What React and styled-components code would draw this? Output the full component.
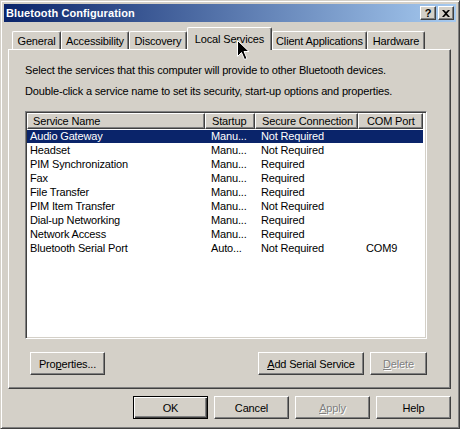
import React from "react";
import styled, { createGlobalStyle } from "styled-components";

const GlobalStyle = createGlobalStyle`
  body {
    margin: 0;
    background: #ffffff;
    font-family: "Liberation Sans", Arial, sans-serif;
    font-size: 11px;
    letter-spacing: -0.16px;
  }
`;

const tabs = [
  { label: "General", width: 49 },
  { label: "Accessibility", width: 68 },
  { label: "Discovery", width: 58 },
  { label: "Local Services", width: 85, active: true },
  { label: "Client Applications", width: 95 },
  { label: "Hardware", width: 58 },
];

const columns = [
  { label: "Service Name", width: 178, pad: 5 },
  { label: "Startup", width: 50, pad: 6 },
  { label: "Secure Connection", width: 103, pad: 6 },
  { label: "COM Port", width: 65, pad: 8 },
];

const services = [
  ["Audio Gateway", "Manu...", "Not Required", ""],
  ["Headset", "Manu...", "Not Required", ""],
  ["PIM Synchronization", "Manu...", "Required", ""],
  ["Fax", "Manu...", "Required", ""],
  ["File Transfer", "Manu...", "Required", ""],
  ["PIM Item Transfer", "Manu...", "Not Required", ""],
  ["Dial-up Networking", "Manu...", "Required", ""],
  ["Network Access", "Manu...", "Required", ""],
  ["Bluetooth Serial Port", "Auto...", "Not Required", "COM9"],
];

const App = () => {
  return (
    <>
      <GlobalStyle />
      <Window>
        <TitleBar>
          <TitleText>Bluetooth Configuration</TitleText>
          <CaptionButtons>
            <CaptionButton>?</CaptionButton>
            <CaptionButton gap={2}>
              <svg width="8" height="7" viewBox="0 0 8 7">
                <path d="M0 0h2l2 2 2-2h2L5 3.5 8 7H6L4 5 2 7H0l3-3.5z" fill="#000" />
              </svg>
            </CaptionButton>
          </CaptionButtons>
        </TitleBar>

        <Body>
          <TabStrip>
            {tabs.map((t) => (
              <Tab key={t.label} width={t.width} active={t.active}>
                {t.label}
              </Tab>
            ))}
          </TabStrip>

          <Panel>
            <Description>
              Select the services that this computer will provide to other Bluetooth devices.
            </Description>
            <Description second>
              Double-click a service name to set its security, start-up options and properties.
            </Description>

            <ListBox>
              <HeaderRow>
                {columns.map((c) => (
                  <HeaderCell key={c.label} width={c.width} pad={c.pad}>
                    {c.label}
                  </HeaderCell>
                ))}
              </HeaderRow>
              {services.map((row, i) => (
                <Row key={row[0]} selected={i === 0}>
                  {row.map((cell, j) => (
                    <Cell key={j} width={columns[j].width} pad={j === 0 ? 3 : columns[j].pad}>
                      {cell}
                    </Cell>
                  ))}
                </Row>
              ))}
            </ListBox>

            <PanelButtons>
              <Button width={75}>
                Pro<u>p</u>erties...
              </Button>
              <Spacer />
              <Button width={106}>
                <u>A</u>dd Serial Service
              </Button>
              <Button width={57} disabled>
                <u>D</u>elete
              </Button>
            </PanelButtons>
          </Panel>

          <DialogButtons>
            <Button width={75} primary>
              OK
            </Button>
            <Button width={75}>Cancel</Button>
            <Button width={75} disabled>
              <u>A</u>pply
            </Button>
            <Button width={75}>Help</Button>
          </DialogButtons>
        </Body>

        <Cursor width="13" height="21" viewBox="0 0 13 21">
          <path
            d="M0.5 0.5 L0.5 16.5 L4.5 12.5 L7.5 19.5 L10 18.5 L7 11.5 L12 11.5 Z"
            fill="#000"
            stroke="#fff"
            strokeWidth="1"
          />
        </Cursor>
      </Window>
    </>
  );
};

export default App;

const Window = styled.div`
  position: relative;
  width: 460px;
  height: 429px;
  box-sizing: border-box;
  background-color: #d4d0c8;
  border: 1px solid;
  border-color: #d4d0c8 #404040 #404040 #d4d0c8;
  box-shadow: inset 1px 1px #ffffff, inset -1px -1px #808080;
  padding: 3px;
  display: flex;
  flex-direction: column;
  overflow: hidden;
`;

const TitleBar = styled.div`
  height: 18px;
  flex-shrink: 0;
  display: flex;
  align-items: center;
  justify-content: space-between;
  padding: 0 2px 0 2px;
  background: linear-gradient(to right, #0a246a, #a6caf0);
`;

const TitleText = styled.div`
  color: #ffffff;
  font-weight: 700;
  font-size: 11px;
  letter-spacing: 0.1px;
`;

const CaptionButtons = styled.div`
  display: flex;
  align-items: center;
`;

const CaptionButton = styled.div`
  width: 16px;
  height: 14px;
  box-sizing: border-box;
  margin-left: ${(p) => p.gap || 0}px;
  background-color: #d4d0c8;
  border: 1px solid;
  border-color: #ffffff #404040 #404040 #ffffff;
  box-shadow: inset -1px -1px #808080;
  display: flex;
  align-items: center;
  justify-content: center;
  font-weight: 700;
  font-size: 11px;
  line-height: 1;
  color: #000;
`;

const Body = styled.div`
  flex: 1;
  display: flex;
  flex-direction: column;
  padding: 5px 5px 0 4px;
`;

const TabStrip = styled.div`
  height: 22px;
  display: flex;
  align-items: flex-end;
  padding-left: 4px;
  position: relative;
  z-index: 1;
`;

const Tab = styled.div`
  width: ${(p) => p.width}px;
  height: ${(p) => (p.active ? 23 : 18)}px;
  margin-bottom: ${(p) => (p.active ? -1 : 0)}px;
  box-sizing: border-box;
  background-color: #d4d0c8;
  border-top: 1px solid #ffffff;
  border-left: 1px solid #ffffff;
  border-right: 1px solid #404040;
  border-radius: 2px 2px 0 0;
  box-shadow: inset -1px 0 #808080;
  display: flex;
  align-items: ${(p) => (p.active ? "flex-start" : "center")};
  padding-top: ${(p) => (p.active ? 5 : 0)}px;
  justify-content: center;
  white-space: nowrap;
  color: #000;
`;

const Panel = styled.div`
  height: 340px;
  box-sizing: border-box;
  border: 1px solid;
  border-color: #ffffff #404040 #404040 #ffffff;
  box-shadow: inset -1px -1px #808080;
  padding: 13px 16px 0 16px;
  display: flex;
  flex-direction: column;
`;

const Description = styled.div`
  line-height: 14px;
  height: 14px;
  white-space: nowrap;
  margin-top: ${(p) => (p.second ? 7 : 0)}px;
  color: #000;
`;

const ListBox = styled.div`
  margin-top: 13px;
  width: 402px;
  height: 228px;
  box-sizing: border-box;
  background: #ffffff;
  border: 1px solid;
  border-color: #808080 #ffffff #ffffff #808080;
  box-shadow: inset 1px 1px #404040, inset -1px -1px #d4d0c8;
  padding: 1px;
  display: flex;
  flex-direction: column;
  overflow: hidden;
`;

const HeaderRow = styled.div`
  display: flex;
  height: 16px;
  flex-shrink: 0;
`;

const HeaderCell = styled.div`
  width: ${(p) => p.width}px;
  flex-shrink: 0;
  box-sizing: border-box;
  background: #d4d0c8;
  border: 1px solid;
  border-color: #ffffff #404040 #404040 #ffffff;
  box-shadow: inset -1px -1px #808080;
  padding-left: ${(p) => p.pad}px;
  display: flex;
  align-items: center;
  white-space: nowrap;
  overflow: hidden;
  color: #000;
`;

const Row = styled.div`
  display: flex;
  height: 14px;
  flex-shrink: 0;
  width: 396px;
  box-sizing: border-box;
  background: ${(p) => (p.selected ? "#0a246a" : "transparent")};
  color: ${(p) => (p.selected ? "#ffffff" : "#000000")};
  border-top: 1px solid #fff;
`;

const Cell = styled.div`
  width: ${(p) => p.width}px;
  flex-shrink: 0;
  box-sizing: border-box;
  padding-left: ${(p) => p.pad}px;
  line-height: 12px;
  white-space: nowrap;
  overflow: hidden;
`;

const PanelButtons = styled.div`
  display: flex;
  gap: 6px;
  margin-top: 13px;
  width: 402px;
  padding-left: 5px;
  box-sizing: border-box;
`;

const Spacer = styled.div`
  flex: 1;
`;

const Button = styled.div`
  width: ${(p) => p.width}px;
  height: 23px;
  box-sizing: border-box;
  background: #d4d0c8;
  border: 1px solid;
  border-color: ${(p) => (p.primary ? "#000" : "#ffffff #404040 #404040 #ffffff")};
  box-shadow: ${(p) =>
    p.primary
      ? "inset 1px 1px #ffffff, inset -1px -1px #404040, inset -2px -2px #808080"
      : "inset -1px -1px #808080"};
  display: flex;
  align-items: center;
  justify-content: center;
  white-space: nowrap;
  color: ${(p) => (p.disabled ? "#808080" : "#000")};
  text-shadow: ${(p) => (p.disabled ? "1px 1px #ffffff" : "none")};

  u {
    text-decoration: underline;
    text-underline-offset: 1px;
  }
`;

const DialogButtons = styled.div`
  display: flex;
  justify-content: flex-end;
  gap: 6px;
  margin-top: 7px;
`;

const Cursor = styled.svg`
  position: absolute;
  left: 236px;
  top: 39px;
  z-index: 5;
`;
